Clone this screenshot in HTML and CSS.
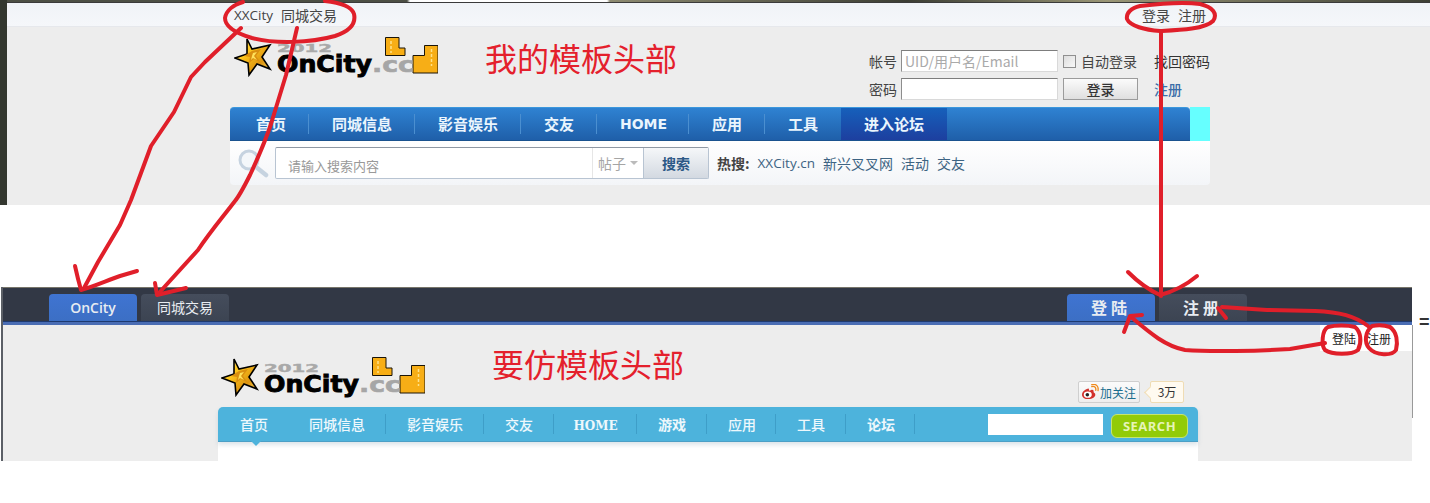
FILE: index.html
```html
<!DOCTYPE html>
<html lang="zh-CN">
<head>
<meta charset="utf-8">
<title>模板头部对比</title>
<link rel="stylesheet" href="styles.css">
</head>
<body>
<svg class="defs" width="0" height="0" aria-hidden="true">
  <defs>
    <linearGradient id="gold" x1="0" y1="0" x2="1" y2="1">
      <stop offset="0" stop-color="#fff0a0"/>
      <stop offset=".35" stop-color="#ffc81e"/>
      <stop offset=".7" stop-color="#dc9410"/>
      <stop offset="1" stop-color="#ffe067"/>
    </linearGradient>
    <symbol id="logo" viewBox="0 0 204 42">
      <polygon class="logo-star" points="13,3 18,13 36,9 28,21 36,33 23,28 15,39 14,27 1,22 13,18"/>
      <polygon class="logo-star-in" points="18,15 27,13 22,20 27,27 20,23 15,27 16,21 10,20"/>
      <polygon class="logo-star-hi" points="19,17 23,16 20,20 23,24 19,22 17,24 18,20"/>
      <polygon class="logo-bld" points="151.500,1.500 165,1.500 165,12 171,12 171,19.500 151.500,19.500"/>
      <polygon class="logo-bld" points="190.500,9.500 204,9.500 204,37 179,37 179,19.500 190.500,19.500"/>
      <path class="logo-dash" d="M197.500 13v17M157 5v12"/>
      <text class="logo-year" x="43" y="16" textLength="55" lengthAdjust="spacingAndGlyphs">2012</text>
      <text class="logo-cc" x="138" y="36" textLength="42" lengthAdjust="spacingAndGlyphs">.cc</text>
      <text class="logo-name" x="43" y="35.500" textLength="95" lengthAdjust="spacingAndGlyphs">OnCity</text>
    </symbol>
  </defs>
</svg>

<section class="shot-a">
  <div class="a-strip"></div>
  <div class="a-topbar">
    <div class="a-wrap a-topbar-in">
      <div class="a-links"><a class="lat">XXCity</a><a>同城交易</a></div>
      <div class="a-links"><a>登录</a><a>注册</a></div>
    </div>
  </div>
  <div class="a-wrap a-head">
    <svg class="logo a-logo"><use href="#logo"/></svg>
    <h1 class="note a-note">我的模板头部</h1>
    <form class="login">
      <label class="login-l">帐号</label>
      <input class="login-i" type="text" placeholder="UID/用户名/Email">
      <label class="login-c"><span class="check"></span>自动登录</label>
      <a class="login-a">找回密码</a>
      <label class="login-l">密码</label>
      <input class="login-i" type="password">
      <button class="login-b" type="button">登录</button>
      <a class="login-a login-reg">注册</a>
    </form>
  </div>
  <div class="a-wrap a-navrow">
    <nav class="a-nav">
      <a class="a-first">首页</a><a>同城信息</a><a>影音娱乐</a><a>交友</a><a class="lat-nav">HOME</a><a>应用</a><a>工具</a><a class="a-on">进入论坛</a>
    </nav>
    <div class="a-cyan"></div>
  </div>
  <div class="a-wrap a-search">
    <svg class="a-mag" width="32" height="30" viewBox="0 0 32 30" aria-hidden="true">
      <circle cx="12" cy="12" r="9" fill="#f4f7fa" stroke="#c6d3e0" stroke-width="3"/>
      <path d="M19 19l10 8" stroke="#c6d3e0" stroke-width="4.500" stroke-linecap="round"/>
    </svg>
    <div class="a-box">
      <input class="a-q" type="text" placeholder="请输入搜索内容">
      <span class="a-type">帖子<i class="a-caret"></i></span>
      <button class="a-btn" type="button">搜索</button>
    </div>
    <div class="a-hot"><b>热搜:</b><a class="lat">XXCity.cn</a><a>新兴叉叉网</a><a>活动</a><a>交友</a></div>
  </div>
</section>

<section class="shot-b">
  <div class="b-bar">
    <a class="tab tab-on lat-tab">OnCity</a>
    <a class="tab">同城交易</a>
    <div class="b-right">
      <a class="tab tab-on tab-wide">登陆</a>
      <a class="tab tab-wide">注册</a>
    </div>
  </div>
  <div class="b-band"></div>
  <div class="b-body">
    <div class="b-links"><a>登陆</a><a>注册</a></div>
    <div class="b-wrap b-head">
      <svg class="logo b-logo"><use href="#logo"/></svg>
      <h2 class="note b-note">要仿模板头部</h2>
      <div class="wb">
        <a class="wb-btn">
          <svg width="18" height="16" viewBox="0 0 20 18" aria-hidden="true">
            <path d="M8 5c-4 1-7 4-7 7 0 3 3 5 7 5 5 0 8-3 8-5 0-2-2-2-2-3 .5-2-1-3-3-2l-2 .500c0-2-.5-2.500-1-2.500z" fill="#d2322d"/>
            <ellipse cx="7.500" cy="12" rx="4.500" ry="3.500" fill="#fff"/>
            <circle cx="7" cy="12.200" r="2" fill="#222"/>
            <path d="M12 3c3-1 5 1 4.500 4M12 .8c5-1.500 8 2 7 6.500" fill="none" stroke="#f08a1d" stroke-width="1.500" stroke-linecap="round"/>
          </svg>
          <span>加关注</span>
        </a>
        <span class="wb-count">3万</span>
      </div>
    </div>
    <nav class="b-wrap b-nav">
      <a class="b-item b-first">首页</a><a class="b-item b-nosep">同城信息</a><a class="b-item">影音娱乐</a><a class="b-item">交友</a><a class="b-item b-home">HOME</a><a class="b-item b-bold">游戏</a><a class="b-item">应用</a><a class="b-item">工具</a><a class="b-item b-bold">论坛</a>
      <div class="b-find">
        <input class="b-q" type="text">
        <button class="b-go" type="button">SEARCH</button>
      </div>
    </nav>
    <div class="b-wrap b-under"></div>
  </div>
</section>
<span class="eq">=</span>

<svg class="ink" width="1430" height="503" viewBox="0 0 1430 503" aria-hidden="true">
  <path d="M243 2C233 5 226 11 225 18C225 26 235 33 252 38C275 44 310 43 335 36C350 31 356 23 354 14C352 7 343 3 325 1"/>
  <path d="M241 28L205 62L191 77L174 112L151 146L141 173L131 200L120 225L98 262L84 288"/>
  <path d="M75 266C77 275 79 283 81 290C95 286 108 280 120 276L137 271"/>
  <path d="M297 28L286 75L271 124C264 145 256 162 250 175C244 187 240 195 235 201C222 218 210 232 198 250L158 294"/>
  <path d="M155 283L157 295L186 288"/>
  <path d="M1140 6C1131 8 1126 13 1127 19C1130 26 1145 30 1160 31C1180 30 1205 29 1213 21C1218 14 1213 7 1200 4C1185 2 1165 3 1140 6Z"/>
  <path d="M1161 31V296"/>
  <path d="M1128 272C1138 282 1149 290 1160 295C1172 292 1185 286 1197 276"/>
  <path d="M1325 343L1290 349C1260 351 1210 352 1185 350C1165 346 1150 333 1131 317"/>
  <path d="M1124 332L1130 316L1142 315"/>
  <path d="M1368 326C1355 316 1340 312 1315 311L1267 310L1222 307"/>
  <path d="M1218 308L1226 318"/>
  <path d="M1328 327C1322 330 1321 345 1325 350C1332 355 1352 355 1358 350C1362 342 1361 332 1355 327C1348 325 1335 325 1328 327Z"/>
  <path d="M1372 326C1365 332 1364 342 1369 348C1376 356 1392 356 1396 350C1398 342 1397 332 1390 327C1384 325 1378 325 1372 326Z"/>
</svg>
</body>
</html>
```
FILE: styles.css
```css
* { box-sizing: border-box; }
html, body { margin: 0; padding: 0; }
body {
  width: 1430px;
  height: 503px;
  overflow: hidden;
  position: relative;
  background: #fff;
  color: #333;
  font-family: "Noto Sans CJK SC", "Liberation Sans", sans-serif;
  font-size: 14px;
}
a { color: inherit; text-decoration: none; }
.defs { position: absolute; }
.lat { font-family: "Open Sans", sans-serif; font-size: 13.500px; }

/* logo */
.logo { display: block; width: 204px; height: 42px; flex: none; }
.logo-star { fill: url(#gold); stroke: #000; stroke-width: 1.6; stroke-linejoin: miter; }
.logo-star-in { fill: #d98f10; }
.logo-star-hi { fill: #ffe15a; }
.logo-bld { fill: #f7ae16; stroke: #1a1408; stroke-width: 1; }
.logo-dash { fill: none; stroke: #ffe28a; stroke-width: 1.5; stroke-dasharray: 3 2; }
.logo-year { font: 700 10px "DejaVu Sans", sans-serif; fill: #a9a9a9; stroke: #a9a9a9; stroke-width: .4; }
.logo-name { font: 700 23px "DejaVu Sans", sans-serif; fill: #000; stroke: #000; stroke-width: .9; }
.logo-cc { font: 700 21px "DejaVu Sans", sans-serif; fill: #a6a6a6; stroke: #a6a6a6; stroke-width: .6; }

.note {
  margin: 0;
  font-size: 32px;
  font-weight: 400;
  line-height: 32px;
  color: #e4202c;
  white-space: nowrap;
}

/* upper screenshot */
.shot-a {
  height: 205px;
  background: #ededed;
  border-left: 7px solid #33372f;
}
.a-strip {
  height: 3px;
  background: linear-gradient(90deg, #4c4f44 0, #4c4f44 400px, #fff 403px, #fff 600px, #8d8a70 603px, #3b3d33 900px, #9a9676 1100px, #3b3d33 1430px);
  border-bottom: 1px solid #3a3a3a;
}
.a-wrap { width: 980px; margin-left: 223px; }
.a-topbar {
  height: 24px;
  background: linear-gradient(#f0f3f7, #f5f7fa);
  border-bottom: 1px solid #e6e8ec;
}
.a-topbar-in {
  display: flex;
  justify-content: space-between;
  align-items: center;
  height: 23px;
  padding: 0 4px;
}
.a-links { display: flex; align-items: center; gap: 8px; color: #444; line-height: 20px; }
.a-head { height: 80px; display: flex; align-items: flex-start; position: relative; }
.a-logo { margin: 9px 0 0 4px; }
.a-note { margin: 14px 0 0 47px; }
.login {
  margin: 23px 0 0 auto;
  display: grid;
  grid-template-columns: 27px 157px 75px 67px;
  grid-template-rows: 22px 22px;
  column-gap: 5px;
  row-gap: 6px;
  font-size: 14px;
}
.login-l, .login-c, .login-a { display: flex; align-items: center; white-space: nowrap; color: #444; }
.login-a { margin-left: 11px; color: #333; }
.login-reg { color: #3b6ea8; font-weight: 500; }
.login-i {
  width: 157px;
  height: 22px;
  border: 1px solid #d9d9d9;
  border-top-color: #7d7d7d;
  border-left-color: #8d8d8d;
  background: #fff;
  padding: 0 3px;
  font: 14px "Noto Sans CJK SC", "Liberation Sans", sans-serif;
  outline: 0;
}
.login-i::placeholder { color: #aaa; opacity: 1; }
.check {
  width: 13px;
  height: 13px;
  margin-right: 5px;
  border: 1px solid #8f8f8f;
  background: linear-gradient(135deg, #ddd, #f8f8f8);
  flex: none;
}
.login-b {
  height: 22px;
  padding: 0;
  border: 1px solid #9b9b9b;
  background: linear-gradient(#fbfbfb, #dfdfdf);
  font: 500 14px "Noto Sans CJK SC", sans-serif;
  color: #333;
}
.a-navrow { display: flex; height: 34px; }
.a-nav {
  width: 960px;
  display: flex;
  background: linear-gradient(#2f82d2, #1f5fa9);
  border-top: 1px solid #3b97dc;
  border-bottom: 1px solid #1a538f;
  border-radius: 4px 4px 0 0;
  color: #eaf5fd;
  font-weight: 700;
  font-size: 15px;
  line-height: 32px;
}
.a-nav a {
  padding: 0 23px;
  position: relative;
  white-space: nowrap;
  width: 76px;
  text-align: center;
  flex: none;
}
.a-nav a:nth-child(1) { width: 79px; padding-left: 26px; padding-right: 23px; }
.a-nav a:nth-child(2), .a-nav a:nth-child(3) { width: 106px; }
.a-nav a:nth-child(5) { width: 92px; }
.a-nav a:nth-child(8) { width: 106px; }
.a-nav a:not(:nth-last-child(-n+2))::after {
  content: "";
  position: absolute;
  right: 0;
  top: 6px;
  height: 20px;
  width: 1px;
  background: #4b8fd0;
}
.lat-nav { font-family: "DejaVu Sans", sans-serif; font-size: 14px; }
.a-nav .a-on { background: linear-gradient(#1660bb, #1d3f9f); }
.a-cyan { width: 20px; background: #66ffff; }
.a-search {
  height: 44px;
  display: flex;
  align-items: center;
  background: linear-gradient(#fff, #f3f5f8);
  border-radius: 0 0 4px 4px;
}
.a-mag { margin: 0 6px 0 7px; flex: none; }
.a-box {
  width: 434px;
  height: 32px;
  display: flex;
  border: 1px solid #b8c4d2;
  border-top-color: #8f98a3;
  border-radius: 2px;
  background: #fff;
}
.a-q {
  flex: 1;
  min-width: 0;
  border: 0;
  outline: 0;
  padding: 4px 12px 0;
  font: 13px "Noto Sans CJK SC", sans-serif;
  background: transparent;
}
.a-q::placeholder { color: #999; opacity: 1; }
.a-type {
  width: 51px;
  display: flex;
  align-items: center;
  padding: 0 0 0 5px;
  gap: 4px;
  color: #a5a5a5;
  border-left: 1px solid #e6e6e6;
}
.a-caret { border: 4px solid transparent; border-top-color: #bbb; border-bottom: 0; }
.a-btn {
  width: 65px;
  border: 0;
  border-left: 1px solid #b8c4d2;
  padding: 0;
  background: linear-gradient(#f5f7f9, #d3d9e1);
  font: 700 14px "Noto Sans CJK SC", sans-serif;
  color: #2c5886;
}
.a-hot { display: flex; align-items: center; gap: 8px; margin-left: 8px; color: #3d6483; white-space: nowrap; }
.a-hot b { color: #444; }

/* lower screenshot */
.shot-b {
  position: absolute;
  left: 1px;
  top: 287px;
  width: 1412px;
  height: 174px;
  border-left: 2px solid #5b5f66;
}
.b-bar {
  height: 34px;
  margin-right: 1px;
  display: flex;
  align-items: flex-end;
  gap: 4px;
  padding-left: 46px;
  background: #323845;
  border-top: 1px solid #77756a;
}
.tab {
  width: 88px;
  height: 27px;
  border-radius: 4px 4px 0 0;
  background: linear-gradient(#454d5c, #3c4452);
  color: #e8ecf1;
  text-align: center;
  line-height: 27px;
  font-size: 14px;
}
.lat-tab { font-family: "Open Sans", sans-serif; font-weight: 600; }
.tab-on { background: linear-gradient(#3f74d2, #3c6fc4); }
.tab-wide { font-weight: 700; font-size: 16px; letter-spacing: 4px; }
.b-right { display: flex; gap: 4px; margin-left: auto; margin-right: 165px; }
.b-band { height: 4px; margin-right: 1px; background: #4a6db4; border-top: 1px solid #1e3a70; }
.b-body {
  height: 136px;
  background: #ededed;
  border-right: 1px solid;
  border-image: linear-gradient(#999 68%, #fff 68%) 1;
  border-top-width: 0;
  border-bottom-width: 0;
  border-left-width: 0;
}
.b-links {
  width: 92px;
  height: 26px;
  margin-left: auto;
  background: #fff;
  display: flex;
  align-items: center;
  gap: 11px;
  padding-left: 12px;
  font-size: 12px;
  color: #222;
}
.b-wrap { width: 980px; margin-left: 215px; }
.b-head { height: 56px; display: flex; align-items: flex-start; }
.b-logo { margin: 5px 0 0 3px; }
.b-note { margin: -4px 0 0 67px; }
.wb { margin: 30px 14px 0 auto; display: flex; gap: 10px; height: 22px; }
.wb-btn {
  width: 62px;
  display: flex;
  align-items: center;
  gap: 1px;
  padding-left: 2px;
  border: 1px solid #cfcfcf;
  border-radius: 2px;
  background: linear-gradient(#fbfbfb, #eee);
  color: #1a6d8e;
  font-size: 12px;
  white-space: nowrap;
}
.wb-count {
  width: 34px;
  position: relative;
  border: 1px solid #efdcb4;
  border-radius: 2px;
  background: #fffaf0;
  color: #333;
  font-size: 12px;
  line-height: 20px;
  text-align: center;
}
.wb-count::before {
  content: "";
  position: absolute;
  left: -5px;
  top: 6px;
  width: 8px;
  height: 8px;
  background: #fffaf0;
  border-left: 1px solid #efdcb4;
  border-bottom: 1px solid #efdcb4;
  transform: rotate(45deg);
}
.b-nav {
  height: 35px;
  display: flex;
  background: #4db3dc;
  border-bottom: 1px solid #4b9fc6;
  border-radius: 5px 5px 0 0;
  box-shadow: 0 3px 4px rgba(120, 150, 170, .25);
  position: relative;
  color: #edf8fc;
  line-height: 34px;
  font-size: 14px;
  font-weight: 500;
}
.b-item { position: relative; padding: 0 21px; white-space: nowrap; text-align: center; flex: none; }
.b-item::after {
  content: "";
  position: absolute;
  right: 0;
  top: 7px;
  width: 1px;
  height: 20px;
  background: #3e9ec8;
}
.b-first { width: 70px; padding: 0 20px 0 22px; }
.b-first::after {
  left: 33px;
  right: auto;
  top: 34px;
  width: 0;
  height: 0;
  background: none;
  border: 5px solid transparent;
  border-top-color: #4db3dc;
  border-bottom: 0;
}
.b-nosep { width: 98px; }
.b-item:nth-child(3) { width: 98px; }
.b-item:nth-child(4) { width: 70px; }
.b-home { width: 83px; padding: 2px 18px 0; font-family: "DejaVu Serif", serif; font-weight: 700; font-size: 12px; line-height: 34px; }
.b-item:nth-child(6) { width: 70px; }
.b-item:nth-child(7) { width: 69px; }
.b-item:nth-child(8) { width: 70px; }
.b-item:nth-child(9) { width: 69px; }
.b-bold { font-weight: 700; }
.b-first.b-item { font-weight: 500; }
.b-home::after { top: 7px; }
.b-find { margin-left: auto; margin-right: 10px; display: flex; gap: 8px; align-items: flex-start; padding-top: 7px; }
.b-q { width: 115px; height: 21px; border: 0; background: #fff; padding: 0 3px; outline: 0; }
.b-go {
  width: 77px;
  height: 24px;
  padding: 0;
  border: 1px solid #c6e46f;
  border-radius: 6px;
  background: #92cb08;
  color: #e6f4b8;
  font: 700 13px "Open Sans", sans-serif;
  letter-spacing: .5px;
}
.b-under { height: 19px; background: #fff; }

.eq {
  position: absolute;
  left: 1419px;
  top: 310px;
  font: 700 18px/24px "Liberation Sans", sans-serif;
  color: #333;
}

/* hand-drawn annotation ink over both screenshots */
.ink {
  position: absolute;
  left: 0;
  top: 0;
  pointer-events: none;
}
.ink path {
  fill: none;
  stroke: #e01f2a;
  stroke-width: 4;
  stroke-linecap: round;
  stroke-linejoin: round;
}
```
